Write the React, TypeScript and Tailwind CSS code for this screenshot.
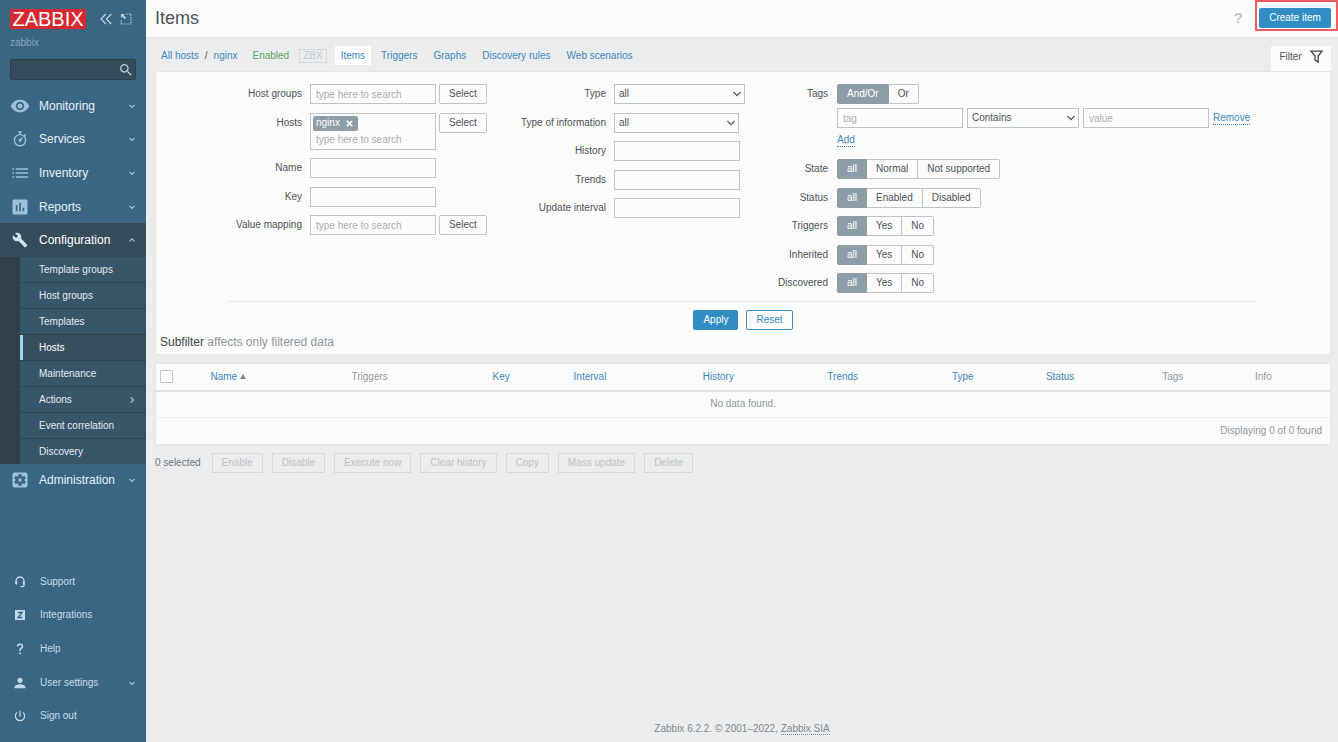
import React from "react";
import {
  MdAssessment,
  MdBuild,
  MdPerson,
  MdPowerSettingsNew,
  MdSearch,
  MdSettingsApplications,
  MdVisibility,
} from "react-icons/md";

function Chevron({ dir = "down" }: { dir?: "down" | "up" | "right" }) {
  const paths = {
    down: "M1.5 2.8 L4 5.3 L6.5 2.8",
    up: "M1.5 5.3 L4 2.8 L6.5 5.3",
    right: "M2.8 1.5 L5.3 4 L2.8 6.5",
  };
  return (
    <svg viewBox="0 0 8 8" className="size-2 shrink-0 text-[#a9c6da]" fill="none" stroke="currentColor" strokeWidth="1.2" aria-hidden="true">
      <path d={paths[dir]} />
    </svg>
  );
}

function StopwatchIcon() {
  return (
    <svg viewBox="0 0 16 16" className="size-4" fill="none" stroke="currentColor" strokeWidth="1.4" aria-hidden="true">
      <circle cx="8" cy="9.2" r="5.6" />
      <path d="M6 0.9h4M8 1v2.4M12.2 3.6l1.5 1.3" />
      <path d="M10.8 5.8 L9.3 10 A1.5 1.5 0 1 1 7 8.2 Z" fill="currentColor" stroke="none" />
    </svg>
  );
}

function ListIcon() {
  return (
    <svg viewBox="0 0 16 12" className="h-3 w-4" fill="none" stroke="currentColor" strokeWidth="1.5" aria-hidden="true">
      <path d="M3.8 2H16M3.8 6H16M3.8 10H16" />
      <path d="M0.4 2h1.6M0.4 6h1.6M0.4 10h1.6" />
    </svg>
  );
}

function HeadsetIcon() {
  return (
    <svg viewBox="0 0 12 12" className="size-3" fill="none" stroke="currentColor" strokeWidth="1.3" aria-hidden="true">
      <path d="M2 8V5a4 4 0 0 1 8 0v4.200a1.500 1.500 0 0 1-1.500 1.500H6.500" />
      <path d="M1.400 5.200h1.800v3.200H2.200a.8.8 0 0 1-.8-.8zM8.800 5.200h1.800v3.200H8.800z" fill="currentColor" stroke="none" />
    </svg>
  );
}

function IntegrationsIcon() {
  return (
    <svg viewBox="0 0 10 10" className="size-[10px]" aria-hidden="true">
      <rect width="10" height="10" fill="currentColor" />
      <path d="M2.800 2.500H7.100L3.100 7.500H7.300" fill="none" stroke="#3a6684" strokeWidth="1.300" />
    </svg>
  );
}

function HelpIcon() {
  return (
    <svg viewBox="0 0 10 12" className="h-3 w-[10px]" fill="none" stroke="currentColor" strokeWidth="1.500" aria-hidden="true">
      <path d="M2.500 3.600C2.500 2.100 3.600 1.300 5 1.300s2.500.8 2.500 2.100C7.500 5 5 5.300 5 7.200v.9" />
      <path d="M5 9.600v1.700" />
    </svg>
  );
}

const mainNav = [
  { label: "Monitoring", icon: <MdVisibility className="size-5" /> },
  { label: "Services", icon: <StopwatchIcon /> },
  { label: "Inventory", icon: <ListIcon /> },
  { label: "Reports", icon: <MdAssessment className="size-5" /> },
  { label: "Configuration", icon: <MdBuild className="size-4" />, open: true },
];

const subNav = ["Template groups", "Host groups", "Templates", "Hosts", "Maintenance", "Actions", "Event correlation", "Discovery"];

const userNav = [
  { label: "Support", icon: <HeadsetIcon /> },
  { label: "Integrations", icon: <IntegrationsIcon /> },
  { label: "Help", icon: <HelpIcon /> },
  { label: "User settings", icon: <MdPerson className="size-4" />, more: true },
  { label: "Sign out", icon: <MdPowerSettingsNew className="size-[14px]" /> },
];

function NavRow({ label, icon, open }: { label: string; icon: React.ReactNode; open?: boolean }) {
  return (
    <a
      href="#"
      className={
        open
          ? "flex h-full items-center bg-[#364c5a] pr-[10px] text-[12px] text-white"
          : "flex h-full items-center pr-[10px] text-[12px] text-[#e6f0f6]"
      }
    >
      <span className={open ? "flex w-[39px] justify-center text-[#cfe3ef]" : "flex w-[39px] justify-center text-[#9dc1d8]"}>{icon}</span>
      <span className="flex-1">{label}</span>
      <Chevron dir={open ? "up" : "down"} />
    </a>
  );
}

function Sidebar() {
  return (
    <aside className="flex w-[146px] shrink-0 flex-col bg-[#3a6684] pb-[9px]">
      <div className="flex h-[38px] items-center pl-[10px]">
        <a href="#" className="flex h-5 w-[76px] items-center justify-center bg-[#d6292f] text-[20px] leading-5 text-white">
          ZABBIX
        </a>
        <button type="button" aria-label="Collapse sidebar" className="ml-[14px] text-[#b5d0e1]">
          <svg viewBox="0 0 12 12" className="size-3" fill="none" stroke="currentColor" strokeWidth="1.300">
            <path d="M5.800 1 L1 6 L5.800 11 M11.200 1 L6.400 6 L11.200 11" />
          </svg>
        </button>
        <button type="button" aria-label="Hide sidebar" className="ml-2 text-[#b5d0e1]">
          <svg viewBox="0 0 12 12" className="size-3" fill="none" stroke="currentColor" strokeWidth="1.200">
            <path d="M6.500 1.200H11V11H1.200V6.500" strokeDasharray="1.300 1.100" />
            <path d="M1 1h4L3.700 2.300 6.200 4.800 4.800 6.200 2.300 3.700 1 5z" fill="currentColor" stroke="none" />
          </svg>
        </button>
      </div>
      <div className="h-[21px] pl-[10px] text-[10px] leading-[10px] text-[#86a9c0]">zabbix</div>
      <form className="mx-[10px] flex h-[21px] items-center rounded-[2px] border border-[#2d3f4b] bg-[#364c5a] pr-px" role="search">
        <input type="text" aria-label="Search" className="h-full min-w-0 flex-1 bg-transparent px-1 text-[10px] text-white outline-none" />
        <button type="button" aria-label="Search" className="text-[#b5c9d5]">
          <MdSearch className="size-4" />
        </button>
      </form>
      <nav className="mt-[9px]">
        <ul className="grid h-[168px] grid-rows-5">
          {mainNav.map((item) => (
            <li key={item.label}>
              <NavRow {...item} />
            </li>
          ))}
        </ul>
        <ul className="border-l-[20px] border-[#303f48] bg-[#385669]">
          {subNav.map((label, i) => (
            <li key={label} className={i < subNav.length - 1 ? "border-b border-[#2f4553]" : ""}>
              <a
                href="#"
                className={
                  label === "Hosts"
                    ? "flex h-[25px] items-center border-l-[3px] border-[#9fd5f3] bg-[#384f5e] pr-[10px] pl-4 text-[10px] text-white"
                    : "flex h-[25px] items-center border-l-[3px] border-transparent pr-[10px] pl-4 text-[10px] text-[#e0ebf2]"
                }
              >
                <span className="flex-1">{label}</span>
                {label === "Actions" && <Chevron dir="right" />}
              </a>
            </li>
          ))}
        </ul>
        <div className="h-8">
          <NavRow label="Administration" icon={<MdSettingsApplications className="size-5" />} />
        </div>
      </nav>
      <ul className="mt-auto grid h-[168px] grid-rows-5">
        {userNav.map((item) => (
          <li key={item.label}>
            <a href="#" className="flex h-full items-center pr-[10px] text-[10px] text-[#c9dce8]">
              <span className="flex w-10 justify-center text-[#c3d9e7]">{item.icon}</span>
              <span className="flex-1">{item.label}</span>
              {item.more && <Chevron />}
            </a>
          </li>
        ))}
      </ul>
    </aside>
  );
}

const fieldClass = "h-5 w-[126px] border border-[#b9c5cb] bg-[#fcfcfc] px-[5px] text-[10px] text-[#4b5256] outline-none placeholder:text-[#a9adaf]";

function Row({ label, htmlFor, labelClass, children }: { label: string; htmlFor: string; labelClass: string; children: React.ReactNode }) {
  return (
    <div className="flex items-start">
      <label htmlFor={htmlFor} className={labelClass}>
        {label}
      </label>
      {children}
    </div>
  );
}

function SelectButton() {
  return (
    <button type="button" className="ml-[3px] h-5 w-12 rounded-[2px] border border-[#b9c5cb] text-[10px]">
      Select
    </button>
  );
}

function Dropdown({ id, label, options, width }: { id: string; label?: string; options: string[]; width: string }) {
  return (
    <div className={width}>
      <select id={id} aria-label={label} className="h-5 w-full appearance-none border border-[#b9c5cb] bg-[#fcfcfc] px-1 text-[10px] text-[#4b5256] outline-none">
        {options.map((o) => (
          <option key={o}>{o}</option>
        ))}
      </select>
      <svg viewBox="0 0 8 6" className="pointer-events-none absolute top-[7px] right-1 h-[6px] w-2" fill="none" stroke="#4b5256" strokeWidth="1.100" aria-hidden="true">
        <path d="M0.500 1 L4 4.700 L7.500 1" />
      </svg>
    </div>
  );
}

function Toggle({ name, options }: { name: string; options: string[] }) {
  return (
    <div role="radiogroup" aria-label={name} className="flex h-5 text-[10px]">
      {options.map((o, i) => (
        <label
          key={o}
          className="relative flex items-center border-y border-r border-[#b9c5cb] px-[9px] first:rounded-l-[2px] first:border-l last:rounded-r-[2px] has-checked:border-[#8d9ea8] has-checked:bg-[#8d9ea8] has-checked:text-white"
        >
          <input id={i === 0 ? name : undefined} type="radio" name={name} defaultChecked={i === 0} className="sr-only" />
          {o}
        </label>
      ))}
    </div>
  );
}

const label1 = "mr-2 w-[74px] text-right leading-5";
const label2 = "mr-2 w-[102px] text-right leading-5";
const label3 = "mr-[9px] w-[62px] text-right leading-5";

function Filter() {
  return (
    <form className="border border-[#e2e6e8] bg-[#fbfbfb] pt-3">
      <div className="mx-auto max-w-[1030px]">
        <div className="flex border-b border-[#e6eaec] pb-2">
          <div className="flex h-[151px] w-[276px] flex-col justify-between">
            <Row label="Host groups" htmlFor="host-groups" labelClass={label1}>
              <input id="host-groups" type="text" placeholder="type here to search" className={fieldClass} />
              <SelectButton />
            </Row>
            <Row label="Hosts" htmlFor="hosts" labelClass={label1}>
              <div className="h-[37px] w-[126px] border border-[#b9c5cb] bg-[#fcfcfc] pt-[2px] pl-[2px]">
                <span className="flex h-[15px] w-[45px] items-center gap-[6px] rounded-[2px] bg-[#8d9ea8] pl-[3px] text-[10px] leading-[14px] text-white">
                  nginx
                  <button type="button" aria-label="Remove nginx">
                    <svg viewBox="0 0 7 7" className="size-[7px]" stroke="currentColor" strokeWidth="1.700">
                      <path d="M0.800 0.800 L6.200 6.200 M6.200 0.800 L0.800 6.200" />
                    </svg>
                  </button>
                </span>
                <input id="hosts" type="text" placeholder="type here to search" className="h-[18px] w-full bg-transparent px-[3px] text-[10px] outline-none placeholder:text-[#a9adaf]" />
              </div>
              <SelectButton />
            </Row>
            <Row label="Name" htmlFor="name" labelClass={label1}>
              <input id="name" type="text" className={fieldClass} />
            </Row>
            <Row label="Key" htmlFor="key" labelClass={label1}>
              <input id="key" type="text" className={fieldClass} />
            </Row>
            <Row label="Value mapping" htmlFor="value-mapping" labelClass={label1}>
              <input id="value-mapping" type="text" placeholder="type here to search" className={fieldClass} />
              <SelectButton />
            </Row>
          </div>
          <div className="flex h-[134px] w-[262px] flex-col justify-between">
            <Row label="Type" htmlFor="type" labelClass={label2}>
              <Dropdown id="type" options={["all"]} width="relative w-[131px]" />
            </Row>
            <Row label="Type of information" htmlFor="info-type" labelClass={label2}>
              <Dropdown id="info-type" options={["all"]} width="relative w-[125px]" />
            </Row>
            <Row label="History" htmlFor="history" labelClass={label2}>
              <input id="history" type="text" className={fieldClass} />
            </Row>
            <Row label="Trends" htmlFor="trends" labelClass={label2}>
              <input id="trends" type="text" className={fieldClass} />
            </Row>
            <Row label="Update interval" htmlFor="update-interval" labelClass={label2}>
              <input id="update-interval" type="text" className={fieldClass} />
            </Row>
          </div>
          <div className="flex-1">
            <Row label="Tags" htmlFor="tags" labelClass={label3}>
              <div>
                <Toggle name="tags" options={["And/Or", "Or"]} />
                <div className="mt-1 flex items-center gap-1">
                  <input type="text" aria-label="Tag" placeholder="tag" className={fieldClass} />
                  <Dropdown id="tag-operator" label="Tag operator" options={["Contains"]} width="relative w-[112px]" />
                  <input type="text" aria-label="Value" placeholder="value" className={fieldClass} />
                  <button type="button" className="border-b border-dotted border-[#3a87bd] text-[10px] leading-3 text-[#3a87bd]">
                    Remove
                  </button>
                </div>
                <button type="button" className="mt-[6px] block border-b border-dotted border-[#3a87bd] text-[10px] leading-3 text-[#3a87bd]">
                  Add
                </button>
              </div>
            </Row>
            <div className="mt-3 flex h-[134px] flex-col justify-between">
              <Row label="State" htmlFor="state" labelClass={label3}>
                <Toggle name="state" options={["all", "Normal", "Not supported"]} />
              </Row>
              <Row label="Status" htmlFor="status" labelClass={label3}>
                <Toggle name="status" options={["all", "Enabled", "Disabled"]} />
              </Row>
              <Row label="Triggers" htmlFor="triggers" labelClass={label3}>
                <Toggle name="triggers" options={["all", "Yes", "No"]} />
              </Row>
              <Row label="Inherited" htmlFor="inherited" labelClass={label3}>
                <Toggle name="inherited" options={["all", "Yes", "No"]} />
              </Row>
              <Row label="Discovered" htmlFor="discovered" labelClass={label3}>
                <Toggle name="discovered" options={["all", "Yes", "No"]} />
              </Row>
            </div>
          </div>
        </div>
        <div className="flex justify-center gap-2 pt-2">
          <button type="button" className="h-5 rounded-[2px] border border-[#2f86bd] bg-[#328dc4] px-[9px] text-[10px] text-white">
            Apply
          </button>
          <button type="button" className="h-5 rounded-[2px] border border-[#3a8fc4] px-[9px] text-[10px] text-[#3a87bd]">
            Reset
          </button>
        </div>
      </div>
      <h2 className="mt-1 pb-1 pl-1 text-[12px] leading-4 text-[#8d979d]">
        <span className="text-[#3f464a]">Subfilter</span> affects only filtered data
      </h2>
    </form>
  );
}

const columns = [
  { label: "Name", width: "w-[12%]", sortable: true, sorted: true },
  { label: "Triggers", width: "w-[12%]" },
  { label: "Key", width: "w-[6.9%]", sortable: true },
  { label: "Interval", width: "w-[11%]", sortable: true },
  { label: "History", width: "w-[10.6%]", sortable: true },
  { label: "Trends", width: "w-[10.6%]", sortable: true },
  { label: "Type", width: "w-[8%]", sortable: true },
  { label: "Status", width: "w-[9.9%]", sortable: true },
  { label: "Tags", width: "w-[7.9%]" },
  { label: "Info", width: "" },
];

function ItemsTable() {
  return (
    <table className="mt-2 w-full table-fixed border-collapse border border-[#e2e6e8] bg-[#fbfbfb] text-left text-[#8d979d]">
      <thead>
        <tr className="h-[27px] border-b-2 border-[#dce2e5]">
          <th className="w-[51px] pl-1 font-normal">
            <input type="checkbox" aria-label="Select all" className="block size-[13px] appearance-none rounded-[1px] border border-[#b9c5cb] bg-white" />
          </th>
          {columns.map((c) => (
            <th key={c.label} className={c.width + " pl-1 font-normal"}>
              {c.sortable ? (
                <a href="#" className="inline-flex items-center gap-[3px] text-[#3a87bd]">
                  {c.label}
                  {c.sorted && (
                    <svg viewBox="0 0 6 5" className="h-[5px] w-[6px] text-[#7c868c]" fill="currentColor" aria-hidden="true">
                      <path d="M3 0 L6 5 H0z" />
                    </svg>
                  )}
                </a>
              ) : (
                c.label
              )}
            </th>
          ))}
        </tr>
      </thead>
      <tbody>
        <tr className="h-[27px] border-b border-[#eceff0]">
          <td colSpan={11} className="text-center">
            No data found.
          </td>
        </tr>
        <tr className="h-[27px]">
          <td colSpan={11} className="pr-2 text-right">
            Displaying 0 of 0 found
          </td>
        </tr>
      </tbody>
    </table>
  );
}

const actions = ["Enable", "Disable", "Execute now", "Clear history", "Copy", "Mass update", "Delete"];

export default function App() {
  return (
    <div className="flex min-h-screen bg-[#ebeced] font-['Liberation_Sans',Arial,sans-serif] text-[10px] leading-[14px] text-[#4b5256]">
      <Sidebar />
      <main className="flex min-w-0 flex-1 flex-col">
        <header className="relative flex h-[38px] items-center border-b border-[#dfe3e5] bg-[#fcfcfc] pr-[7px] pb-px pl-[9px]">
          <h1 className="flex-1 text-[18px] leading-6 text-[#4b5256]">Items</h1>
          <a href="#" aria-label="Help" className="mr-4 text-[15px] font-bold text-[#c0c5c8]">
            ?
          </a>
          <button type="button" className="h-5 w-[72px] rounded-[2px] bg-[#328dc4] text-[10px] text-white">
            Create item
          </button>
          <span className="pointer-events-none absolute top-0 right-0 h-[31px] w-[83px] border-2 border-[#ee5c60]" />
        </header>
        <div className="px-[9px] pr-[7px]">
          <div className="flex h-[33px] items-end justify-between">
            <nav className="flex h-full items-center pt-[2px] text-[#3a87bd]">
              <a href="#" className="ml-[6px]">All hosts</a>
              <span className="mx-[6px] text-[#4b5256]">/</span>
              <a href="#">nginx</a>
              <span className="ml-[15px] text-[#58a55c]">Enabled</span>
              <span className="ml-[10px] flex h-[14px] items-center border border-[#d3d7d9] px-[3px] text-[#c3c8cb]">ZBX</span>
              <a href="#" className="ml-2 flex h-[19px] items-center bg-white px-[6px]">Items</a>
              <a href="#" className="ml-[10px]">Triggers</a>
              <a href="#" className="ml-4">Graphs</a>
              <a href="#" className="ml-4">Discovery rules</a>
              <a href="#" className="ml-4">Web scenarios</a>
            </nav>
            <button type="button" className="flex h-[25px] w-[60px] items-center justify-center gap-2 bg-[#fbfbfb] pb-1">
              Filter
              <svg viewBox="0 0 13 13" className="size-[13px]" fill="none" stroke="#3d4347" strokeWidth="1.300" aria-hidden="true">
                <path d="M1 1.200h11L8.200 6v6L5 9.800V6z" />
              </svg>
            </button>
          </div>
          <Filter />
          <ItemsTable />
          <div className="mt-2 flex items-center gap-[9px] text-[#6c767c]">
            <span className="mr-[2px]">0 selected</span>
            {actions.map((a) => (
              <button key={a} type="button" disabled className="h-5 border border-[#d5d9db] px-[9px] text-[#bcc1c4]">
                {a}
              </button>
            ))}
          </div>
        </div>
        <footer className="mt-auto pb-[6px] text-center text-[#80898f]">
          Zabbix 6.2.2. © 2001–2022,{" "}
          <a href="#" className="border-b border-dotted border-[#80898f]">
            Zabbix SIA
          </a>
        </footer>
      </main>
    </div>
  );
}
